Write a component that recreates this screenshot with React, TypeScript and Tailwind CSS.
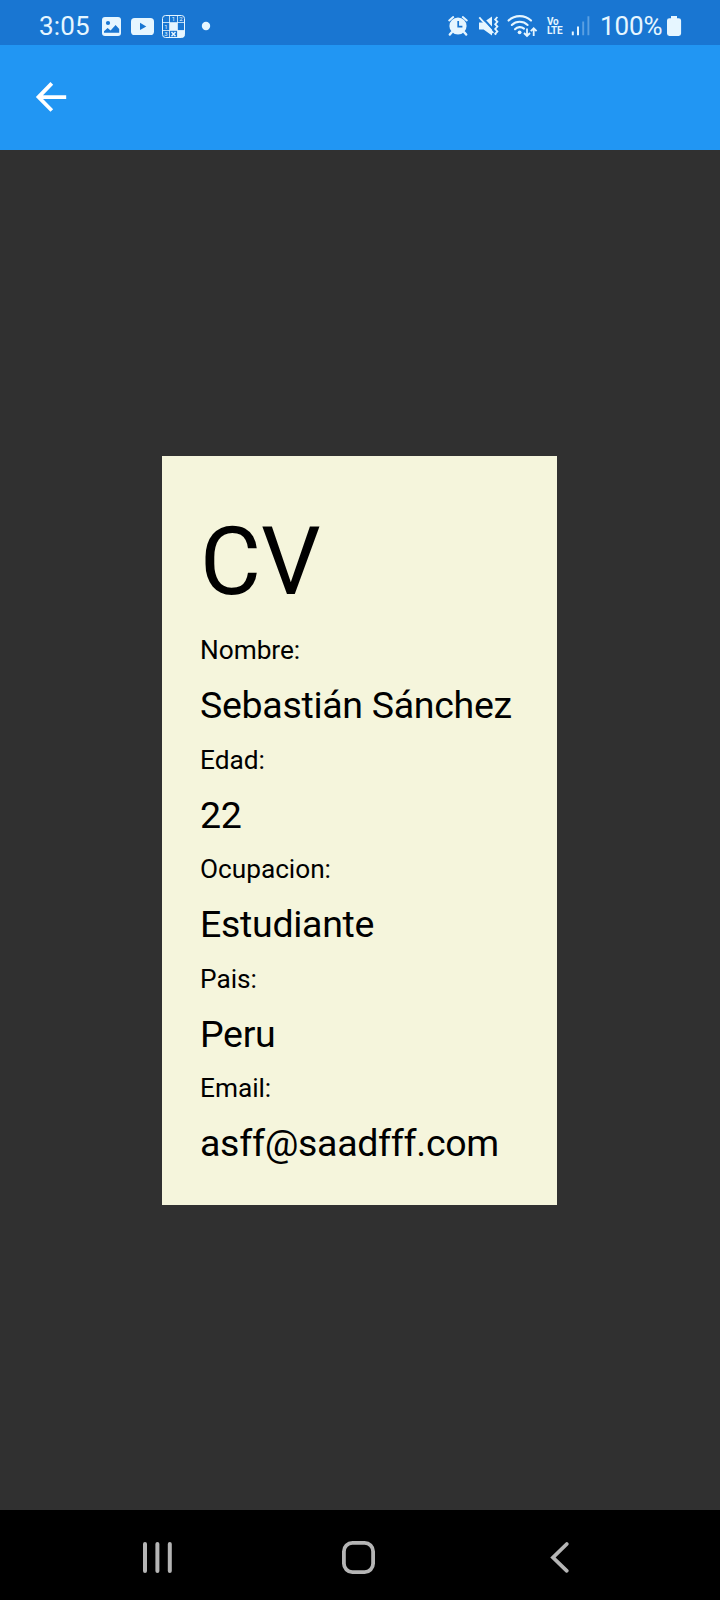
import type { ReactNode } from "react";

const fields = [
  { label: "Nombre:", value: "Sebastián Sánchez" },
  { label: "Edad:", value: "22" },
  { label: "Ocupacion:", value: "Estudiante" },
  { label: "Pais:", value: "Peru" },
  { label: "Email:", value: "asff@saadfff.com" },
];

/** Status bar icon; x is where the icon's slot starts along the bar. */
function StatusIcon({ x, w, children }: { x: number; w: number; children: ReactNode }) {
  return (
    <svg width={w} height={45} viewBox={`${x} 0 ${w} 45`} fill="none" className="shrink-0">
      {children}
    </svg>
  );
}

function StatusBar() {
  return (
    <div className="flex h-[45px] items-start bg-[#1976d2] text-[#e6f6ff]">
      <span className="h-[45px] w-[98px] shrink-0 pl-[39px] text-[26px] leading-[52px] tracking-[0.2px]">3:05</span>
      <StatusIcon x={98} w={28}>
        <rect x="102" y="17" width="19" height="19" rx="3" fill="currentColor" />
        <circle cx="108" cy="23" r="2.1" fill="#1976d2" />
        <path d="M104 32.8v-1.6l3.6-3.2 3 2.5 5-5.5 3.6 4v3.8z" fill="#1976d2" />
      </StatusIcon>
      <StatusIcon x={126} w={32}>
        <rect x="131" y="18" width="23" height="17" rx="3.6" fill="currentColor" />
        <path d="M140 22.7v7.4l6.3-3.7z" fill="#1976d2" />
      </StatusIcon>
      <StatusIcon x={158} w={32}>
        <rect x="162.5" y="15.5" width="22" height="22" rx="3" stroke="currentColor" strokeWidth="1" />
        <path d="M169.5 15.5v22M177.5 15.5v22M162.5 22.5h22M162.5 30.5h22" stroke="currentColor" strokeWidth="0.8" />
        <rect x="170" y="23" width="7.2" height="7" fill="currentColor" />
        <path d="M177.5 30.4h7.1v4.8a2.6 2.6 0 0 1-2.6 2.4h-4.5z" fill="currentColor" />
        <g fill="currentColor" fontSize="6" fontFamily="Roboto, sans-serif" textAnchor="middle">
          <text x="173.5" y="21.3">1</text>
          <text x="181" y="21.3">2</text>
          <text x="166" y="28.7">1</text>
          <text x="166" y="36">3</text>
        </g>
        <path d="M171.5 32l4 4.2M175.5 32l-4 4.2" stroke="currentColor" strokeWidth="1.4" />
      </StatusIcon>
      <StatusIcon x={190} w={254}>
        <circle cx="206" cy="26" r="4.2" fill="currentColor" />
      </StatusIcon>
      <StatusIcon x={444} w={30}>
        <circle cx="458" cy="26" r="8.6" fill="currentColor" />
        <path d="M449.2 20.4l4-3.3M466.8 20.4l-4-3.3" stroke="currentColor" strokeWidth="2" strokeLinecap="round" />
        <path d="M451.8 32.2l-2 2.4M464.2 32.2l2 2.4" stroke="currentColor" strokeWidth="2.4" strokeLinecap="round" />
        <path d="M458.2 21v5.6h4.2" stroke="#1976d2" strokeWidth="1.7" />
      </StatusIcon>
      <StatusIcon x={474} w={29}>
        <path d="M479 22.4h4.2l8.8-6v19.2l-8.4-6H479z" fill="currentColor" />
        <path d="M480.5 15.8l13 14" stroke="#1976d2" strokeWidth="2" />
        <path d="M479.3 17.4l14 15.6" stroke="currentColor" strokeWidth="1.8" />
        <path d="M497.4 17l-2.2 2.4 2.2 2.4-2.2 2.4 2.2 2.4-2.2 2.4 2.2 2.4-2.2 2.4.8 1" stroke="currentColor" strokeWidth="1.8" />
      </StatusIcon>
      <StatusIcon x={503} w={39}>
        <g stroke="currentColor" strokeWidth="2.1" strokeLinecap="round">
          <path d="M508.6 20.6a16.2 16.2 0 0 1 22.4 0" />
          <path d="M511.8 25a11.4 11.4 0 0 1 15.8 0" />
          <path d="M515 29.2a6.7 6.7 0 0 1 9 -.6" />
        </g>
        <circle cx="519.6" cy="32.3" r="1.9" fill="currentColor" />
        <path d="M527 28.6v7M524 33l3 3 3-3M533.7 36v-7.2M530.8 31.2l2.9-3 2.9 3" stroke="currentColor" strokeWidth="1.8" />
      </StatusIcon>
      <div className="flex h-[45px] w-[26px] shrink-0 flex-col pt-[17px] pl-[5px] text-[10px] leading-[9px] font-bold tracking-[-0.2px]">
        <span>Vo</span>
        <span>LTE</span>
      </div>
      <StatusIcon x={568} w={32}>
        <path d="M572.8 31.6v3.6M578 26.6v8.6" stroke="currentColor" strokeWidth="2" />
        <path d="M583.2 21.4v13.8M588.4 16.2v19" stroke="#5ba0e2" strokeWidth="1.9" />
      </StatusIcon>
      <span className="h-[45px] w-[66px] shrink-0 text-[26px] leading-[52px] tracking-[-0.1px]">100%</span>
      <StatusIcon x={666} w={54}>
        <path d="M671 16h6v2.2h1.7a2.4 2.4 0 0 1 2.4 2.4v13a2.4 2.4 0 0 1-2.4 2.4h-9.3a2.4 2.4 0 0 1-2.4-2.4v-13a2.4 2.4 0 0 1 2.4-2.4h1.6z" fill="currentColor" />
      </StatusIcon>
    </div>
  );
}

function AppBar() {
  return (
    <header className="flex h-[105px] items-center bg-[#2196f3] pl-[35px]">
      <button aria-label="Back">
        <svg width="32" height="32" viewBox="35 81.5 32 32" className="block">
          <path d="M51.8 82.9L38.5 96.6l13.3 13.4M38.5 96.6h27.7" fill="none" stroke="#fff" strokeWidth="3.8" />
        </svg>
      </button>
    </header>
  );
}

function NavBar() {
  return (
    <nav className="flex h-[90px] items-start bg-black pt-[30px] text-[#b5b5b5]">
      <svg width="36" height="36" viewBox="0 0 36 36" className="ml-[140px]">
        <path d="M5 4v27M17.4 4v27M29.8 4v27" stroke="currentColor" strokeWidth="4" strokeLinecap="round" />
      </svg>
      <svg width="36" height="36" viewBox="0 0 36 36" className="ml-[164px]">
        <rect x="3.9" y="2.9" width="29.2" height="29.2" rx="8.5" fill="none" stroke="currentColor" strokeWidth="3.8" />
      </svg>
      <svg width="36" height="36" viewBox="0 0 36 36" className="ml-[167px]">
        <path d="M23.8 4L10 17.5l13.8 13.3" fill="none" stroke="currentColor" strokeWidth="3.8" strokeLinecap="round" />
      </svg>
    </nav>
  );
}

export default function App() {
  return (
    <div className="flex h-[1600px] w-[720px] flex-col bg-[#303030] font-[Roboto,sans-serif]">
      <StatusBar />
      <AppBar />
      <main className="flex flex-1 items-start pt-[306px] pl-[162px]">
        <section className="h-[749px] w-[395px] bg-[#f5f5dc] pt-[51px] pl-[38px] text-black">
          <h1 className="h-[128.4px] text-[93.75px] leading-[110px]">CV</h1>
          <dl>
            {fields.map((field) => (
              <div key={field.label} className="h-[109.5px]">
                <dt className="h-[47.9px] text-[26.25px] leading-[31px] tracking-[-0.03px]">{field.label}</dt>
                <dd className="text-[37.5px] leading-[44px] tracking-[-0.3px]">{field.value}</dd>
              </div>
            ))}
          </dl>
        </section>
      </main>
      <NavBar />
    </div>
  );
}
